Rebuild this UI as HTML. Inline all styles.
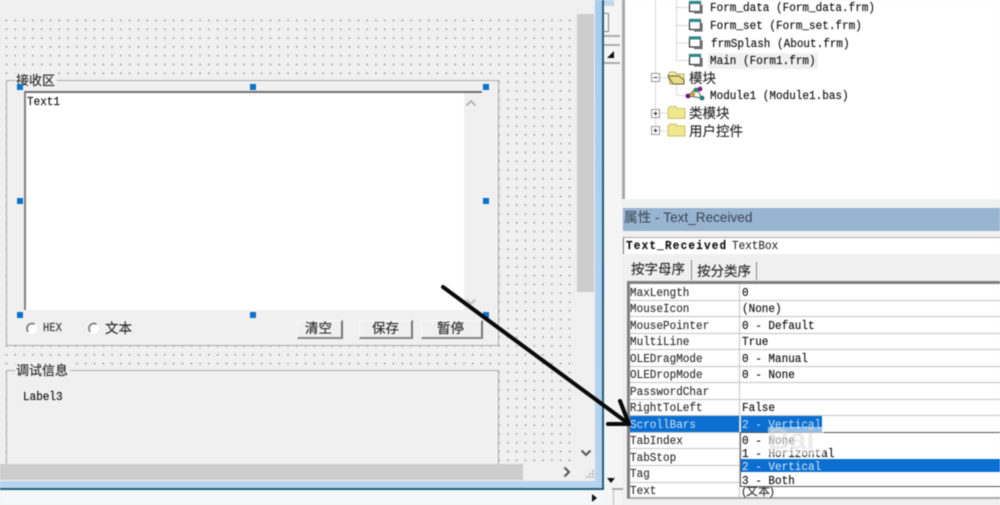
<!DOCTYPE html>
<html><head><meta charset="utf-8">
<style>
html,body{margin:0;padding:0}
body{width:1000px;height:505px;overflow:hidden;position:relative;background:#f0f0f0}
div,span.t{position:absolute;box-sizing:border-box}
.t{font:11px/14px "Liberation Mono","Noto Sans CJK SC",monospace;color:#111;white-space:pre;position:absolute;margin-top:2px;transform:scaleY(1.12);transform-origin:0 50%;-webkit-text-stroke:.15px currentColor}
.c{font:13.5px/18px "Liberation Sans","Noto Sans CJK SC",sans-serif;color:#2a2a2a;white-space:pre;position:absolute;margin-top:1px;-webkit-text-stroke:.15px currentColor}
.h{width:6px;height:6px;background:#0a72cc}
.frame{border:1px solid #aaa;background:#f0f0f0}
.btn{top:320px;height:19px;border-right:2px solid #777;border-bottom:2px solid #888;border-top:1px solid #fafafa;border-left:1px solid #fafafa;background:#f0f0f0}
.hl{height:1px;background:#c4c4c4;left:630px;width:370px}
#all{left:0;top:0;width:1000px;height:505px;filter:blur(.4px)}
</style></head>
<body><div id="all">

<!-- design surface dots -->
<div style="left:0;top:15px;width:576px;height:449px;background-image:radial-gradient(circle at 1px 1px,#ababab 0.8px,transparent 1.1px);background-size:8.8px 8.8px;background-position:5.5px 4.5px"></div>

<!-- frame 1 -->
<div class="frame" style="left:6px;top:80px;width:493px;height:266px"></div>
<div class="c" style="left:15px;top:71px;background:#f0f0f0;padding:0 2px 0 1px;font-size:13px">接收区</div>
<!-- textbox -->
<div style="left:24px;top:91px;width:458px;height:219px;background:#fff;border-top:2px solid #707070;border-left:2px solid #808080"></div>
<div style="left:464px;top:93px;width:18px;height:217px;background:#f0f0f0"></div>
<svg style="position:absolute;left:465px;top:99px" width="12" height="8"><path d="M1.5 6.5L6 2l4.500 4.500" fill="none" stroke="#b5b5b5" stroke-width="2"/></svg>
<svg style="position:absolute;left:465px;top:298px" width="12" height="8"><path d="M1.5 1.5L6 6l4.500-4.500" fill="none" stroke="#c5c5c5" stroke-width="2"/></svg>
<span class="t" style="left:27px;top:94px">Text1</span>
<!-- radios -->
<svg style="position:absolute;left:25px;top:322px" width="13" height="13"><circle cx="6.5" cy="6.5" r="5.5" fill="#fff"/><path d="M9.5 2.2A5 5 0 0 0 3.2 9.8" fill="none" stroke="#777" stroke-width="1.7"/></svg>
<span class="t" style="left:43px;top:320px;font-size:10.500px;color:#333">HEX</span>
<svg style="position:absolute;left:87px;top:322px" width="13" height="13"><circle cx="6.5" cy="6.5" r="5.5" fill="#fff"/><path d="M9.5 2.2A5 5 0 0 0 3.2 9.8" fill="none" stroke="#777" stroke-width="1.7"/></svg>
<div class="c" style="left:105px;top:319px">文本</div>
<!-- buttons -->
<div class="btn" style="left:297px;width:46px"></div>
<div class="btn" style="left:359px;width:54px"></div>
<div class="btn" style="left:421px;width:62px"></div>
<div class="c" style="left:305px;top:319px">清空</div>
<div class="c" style="left:372px;top:319px">保存</div>
<div class="c" style="left:437px;top:319px">暂停</div>

<!-- frame 2 -->
<div class="frame" style="left:6px;top:370px;width:493px;height:110px"></div>
<div class="c" style="left:15px;top:361px;background:#f0f0f0;padding:0 2px 0 1px;font-size:13px">调试信息</div>
<span class="t" style="left:23px;top:389px">Label3</span>

<!-- handles -->
<div class="h" style="left:17px;top:84px"></div><div class="h" style="left:250px;top:84px"></div><div class="h" style="left:483px;top:84px"></div>
<div class="h" style="left:17px;top:198px"></div><div class="h" style="left:483px;top:198px"></div>
<div class="h" style="left:17px;top:312px"></div><div class="h" style="left:250px;top:312px"></div><div class="h" style="left:483px;top:312px"></div>

<!-- scrollbars -->
<div style="left:576px;top:0;width:19px;height:464px;background:#f0f0f0"></div>
<div style="left:577px;top:14px;width:17px;height:278px;background:#cdcdcd"></div>
<svg style="position:absolute;left:580px;top:449px" width="12" height="9"><path d="M1.5 1.5L6 6l4.500-4.500" fill="none" stroke="#555" stroke-width="2"/></svg>
<div style="left:0;top:464px;width:595px;height:17px;background:#f0f0f0"></div>
<div style="left:0;top:464px;width:523px;height:16px;background:#cdcdcd"></div>
<svg style="position:absolute;left:563px;top:466px" width="9" height="12"><path d="M1.5 1.5L6 6l-4.500 4.500" fill="none" stroke="#555" stroke-width="2"/></svg>
<svg style="position:absolute;left:586px;top:470px" width="9" height="9" fill="#bbb"><rect x="6" y="0" width="2" height="2"/><rect x="3" y="3" width="2" height="2"/><rect x="6" y="3" width="2" height="2"/><rect x="0" y="6" width="2" height="2"/><rect x="3" y="6" width="2" height="2"/><rect x="6" y="6" width="2" height="2"/></svg>

<!-- window border -->
<div style="left:0;top:481px;width:604px;height:8px;background:#b9d4ee"></div>
<div style="left:595px;top:0;width:8px;height:489px;background:linear-gradient(#a8cdf0,#b9d4ee)"></div>
<div style="left:602px;top:0;width:2px;height:490px;background:#1f5f78"></div>
<div style="left:0;top:488px;width:612px;height:2px;background:#1f5f78"></div>
<div style="left:0;top:490px;width:604px;height:15px;background:#f6f7f8"></div>
<!-- strip -->
<div style="left:604px;top:0;width:18px;height:505px;background:#f5f5f5"></div>
<div style="left:622px;top:0;width:3px;height:199px;background:#a9a9a9"></div>
<div style="left:604px;top:0;width:10px;height:6px;background:#c5d6ea"></div>
<div style="left:604px;top:13px;width:5px;height:19px;border:1px solid #888;border-left:0"></div>
<div style="left:604px;top:35px;width:16px;height:2px;background:#aaa"></div>
<div style="left:604px;top:44px;width:16px;height:2px;background:#aaa"></div>
<div style="left:604px;top:62px;width:16px;height:2px;background:#aaa"></div>
<svg style="position:absolute;left:607px;top:51px" width="9" height="8"><path d="M0 7L7 0v7z" fill="#111"/></svg>
<svg style="position:absolute;left:607px;top:477px" width="9" height="7"><path d="M0 1h8L4 6z" fill="#111"/></svg>
<svg style="position:absolute;left:591px;top:493px" width="7" height="10"><path d="M1 1v8l5-4z" fill="#111"/></svg>
<div style="left:612px;top:488px;width:11px;height:2px;background:#aaa"></div>
<div style="left:613px;top:490px;width:1px;height:15px;background:#bbb"></div>

<!-- project tree -->
<div style="left:625px;top:0;width:375px;height:199px;background:#fff"></div>
<svg style="position:absolute;left:640px;top:0" width="70" height="140">
<g stroke="#b5b5b5" fill="none" shape-rendering="crispEdges">
<path d="M15.5 0V127" stroke-dasharray="1 1"/>
<path d="M36.5 0V60.5H50M36.5 7.5H50M36.5 25.5H50M36.5 43H50" stroke-dasharray="1 1"/>
<path d="M20 78H29M20 113H29M20 131H29M36.5 84V95.5H50" stroke-dasharray="1 1"/>
<rect x="11.5" y="73.5" width="8" height="8" fill="#fff" stroke="#999"/>
<rect x="11.5" y="109.5" width="8" height="8" fill="#fff" stroke="#999"/>
<rect x="11.5" y="126.5" width="8" height="8" fill="#fff" stroke="#999"/>
</g>
<path d="M13.5 77.5h4M13.5 113.5h4M15.5 111.5v4M13.5 130.5h4M15.5 128.5v4" stroke="#333" fill="none" shape-rendering="crispEdges"/>
<!-- form icons -->
<g fill="#fff" stroke="#333" stroke-width="1.2">
<rect x="49.5" y="1.5" width="11" height="10"/><rect x="49.5" y="19.5" width="11" height="10"/><rect x="49.5" y="37" width="11" height="10"/><rect x="49.5" y="54.5" width="11" height="10"/>
</g>
<g fill="#2d8a8a"><rect x="49" y="1" width="12" height="3"/><rect x="49" y="19" width="12" height="3"/><rect x="49" y="36.500" width="12" height="3"/><rect x="49" y="54" width="12" height="3"/></g>
<g stroke="#444" fill="none"><path d="M62 5v8H54M62 23v8H54M62 40.500v8H54M62 58v8H54"/></g>
<!-- folders -->
<path d="M28 75l2-3h5l1.500 2H44v10H30z" fill="#f3ecb0" stroke="#b5ab60"/>
<path d="M28 76h11l5 4v4H33z" fill="#e9dd85" stroke="#665f2c"/>
<path d="M28 108.500h1l1-2h6l1 2h8v10H28z" fill="#efe88e" stroke="#c8bf70"/>
<path d="M28 126h1l1-2h6l1 2h8v10H28z" fill="#efe88e" stroke="#c8bf70"/>
<!-- module icon -->
<g stroke="#555" stroke-width="1"><path d="M48 96L56 88M56 88L62 98M48 96L62 98"/></g>
<circle cx="48" cy="96" r="2.400" fill="#6b1a6b"/><circle cx="56" cy="90" r="2.400" fill="#2a8a6a"/><circle cx="60" cy="89" r="2.400" fill="#8a1a7a"/><circle cx="53" cy="94" r="2.200" fill="#c9a02a"/><circle cx="62" cy="98" r="2.400" fill="#1a7a7a"/>
</svg>
<span class="t" style="left:710px;top:0px">Form_data (Form_data.frm)</span>
<span class="t" style="left:710px;top:18px">Form_set (Form_set.frm)</span>
<span class="t" style="left:711px;top:36px">frmSplash (About.frm)</span>
<div style="left:708px;top:53px;width:110px;height:16px;background:#f0f0f0"></div>
<span class="t" style="left:710px;top:53px">Main (Form1.frm)</span>
<div class="c" style="left:689px;top:69px">模块</div>
<span class="t" style="left:710px;top:88px">Module1 (Module1.bas)</span>
<div class="c" style="left:689px;top:104px">类模块</div>
<div class="c" style="left:689px;top:122px">用户控件</div>

<!-- properties -->
<div style="left:623px;top:208px;width:377px;height:23px;background:#99b4d1"></div>
<div class="c" style="left:624px;top:208px;color:#3a4652;font-size:13.600px;-webkit-text-stroke:0">属性 - Text_Received</div>
<div style="left:623px;top:237px;width:377px;height:17px;background:#fff;border-left:1px solid #777;border-top:1px solid #aaa"></div>
<span class="t" style="left:626px;top:238px;font-weight:bold;letter-spacing:1.200px">Text_Received</span>
<span class="t" style="left:732px;top:238px;color:#333">TextBox</span>

<!-- tabs -->
<div class="c" style="left:631px;top:260px">按字母序</div>
<div style="left:691px;top:260px;width:1px;height:20px;background:#888"></div>
<div class="c" style="left:697px;top:262px">按分类序</div>
<div style="left:756px;top:262px;width:1px;height:18px;background:#888"></div>

<!-- grid -->
<div style="left:627px;top:281px;width:373px;height:218px;background:#fff;border-top:3px solid #808080;border-left:3px solid #808080;border-bottom:2px solid #aaa"></div>
<div style="left:739px;top:284px;width:1px;height:214px;background:#c4c4c4"></div>
<div class="hl" style="top:300px"></div><div class="hl" style="top:316px"></div><div class="hl" style="top:333px"></div><div class="hl" style="top:349px"></div><div class="hl" style="top:366px"></div><div class="hl" style="top:382px"></div><div class="hl" style="top:399px"></div><div class="hl" style="top:415px"></div><div class="hl" style="top:432px"></div><div class="hl" style="top:448px"></div><div class="hl" style="top:465px"></div><div class="hl" style="top:482px"></div>
<div style="left:630px;top:416px;width:109px;height:16px;background:#0a6fd0"></div>
<div style="left:741px;top:416px;width:81px;height:16px;background:#0a6fd0"></div>

<span class="t" style="left:630px;top:285px;color:#333">MaxLength</span><span class="t" style="left:742px;top:285px">0</span>
<span class="t" style="left:630px;top:301px;color:#333">MouseIcon</span><span class="t" style="left:742px;top:301px">(None)</span>
<span class="t" style="left:630px;top:318px;color:#333">MousePointer</span><span class="t" style="left:742px;top:318px">0 - Default</span>
<span class="t" style="left:630px;top:334px;color:#333">MultiLine</span><span class="t" style="left:742px;top:334px">True</span>
<span class="t" style="left:630px;top:351px;color:#333">OLEDragMode</span><span class="t" style="left:742px;top:351px">0 - Manual</span>
<span class="t" style="left:630px;top:367px;color:#333">OLEDropMode</span><span class="t" style="left:742px;top:367px">0 - None</span>
<span class="t" style="left:630px;top:384px;color:#333">PasswordChar</span>
<span class="t" style="left:630px;top:400px;color:#333">RightToLeft</span><span class="t" style="left:742px;top:400px">False</span>
<span class="t" style="left:630px;top:417px;color:#cfe3f7;-webkit-text-stroke:0">ScrollBars</span><span class="t" style="left:742px;top:417px;color:#cfe3f7;-webkit-text-stroke:0">2 - Vertical</span>
<span class="t" style="left:630px;top:433px;color:#333">TabIndex</span>
<span class="t" style="left:630px;top:450px;color:#333">TabStop</span>
<span class="t" style="left:630px;top:466px;color:#333">Tag</span>
<span class="t" style="left:630px;top:483px;color:#333">Text</span>
<div class="c" style="left:742px;top:481px;color:#333;font-size:12px">(文本)</div>

<!-- dropdown -->
<div style="left:740px;top:432px;width:260px;height:55px;background:#fff;border:1px solid #555;border-right:0"></div>
<div style="left:741px;top:459px;width:259px;height:13px;background:#0a6fd0"></div>
<span class="t" style="left:742px;top:433px">0 - None</span>
<span class="t" style="left:742px;top:446px">1 - Horizontal</span>
<span class="t" style="left:742px;top:459px;color:#dbe9f7;-webkit-text-stroke:0">2 - Vertical</span>
<span class="t" style="left:742px;top:473px">3 - Both</span>
<div style="left:768px;top:427px;width:56px;height:28px;background:rgba(255,255,255,.55)"></div>
<span class="t" style="left:768px;top:423px;margin:0;font:bold 30px/34px 'Liberation Sans',sans-serif;color:rgba(215,215,215,.5);-webkit-text-stroke:0;transform:none">Bai</span>

<!-- arrow -->
<svg style="position:absolute;left:430px;top:275px" width="210" height="160">
<g stroke="#0a0a0a" stroke-width="4" stroke-linecap="round" fill="none">
<path d="M13 12L199 149"/><path d="M190 126L199 149"/><path d="M178 149L199 149"/>
</g></svg>
</div></body></html>
